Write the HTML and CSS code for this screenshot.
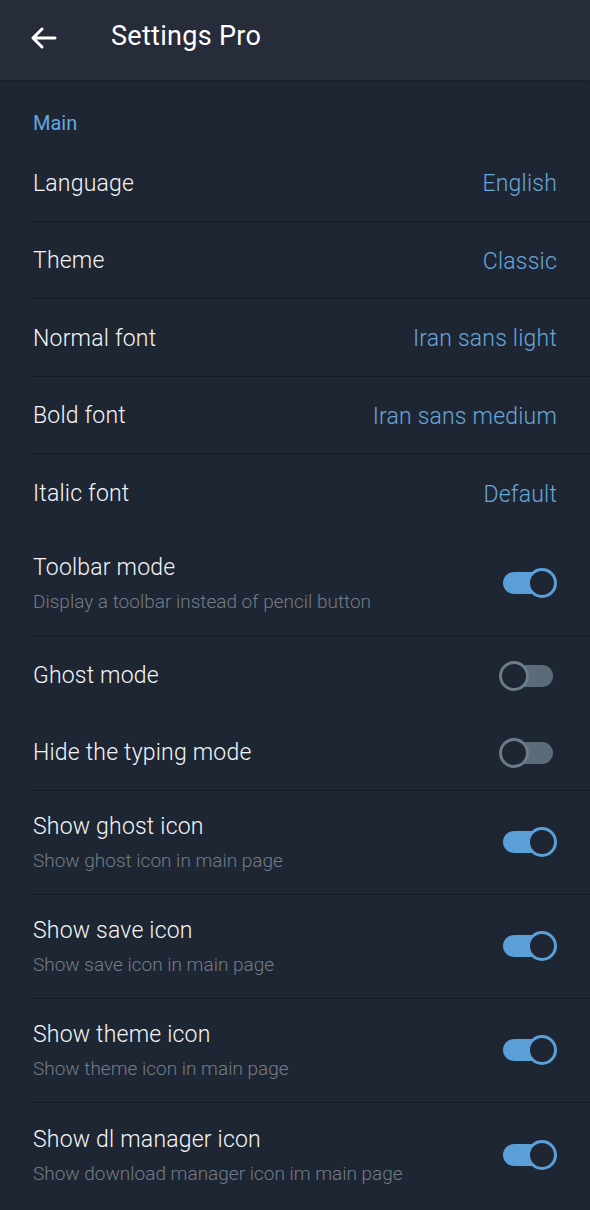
FILE: index.html
```html
<!DOCTYPE html>
<html>
<head>
<meta charset="utf-8">
<link rel="stylesheet" href="styles.css">
</head>
<body>
<div class="app">
  <header class="toolbar">
    <svg class="back" width="28" height="24" viewBox="0 0 28 24"><path d="M26 12H4M13 3L4 12L13 21" fill="none" stroke="#ffffff" stroke-width="3" stroke-linecap="round" stroke-linejoin="round"/></svg>
    <div class="title">Settings Pro</div>
  </header>
  <main class="list">
    <div class="section">Main</div>
    <div class="row single div"><span class="label">Language</span><span class="value">English</span></div>
    <div class="row single div"><span class="label">Theme</span><span class="value">Classic</span></div>
    <div class="row single div"><span class="label">Normal font</span><span class="value">Iran sans light</span></div>
    <div class="row single div"><span class="label">Bold font</span><span class="value">Iran sans medium</span></div>
    <div class="row single"><span class="label">Italic font</span><span class="value">Default</span></div>
    <div class="row double div">
      <div class="texts"><div class="label">Toolbar mode</div><div class="sub">Display a toolbar instead of pencil button</div></div>
      <div class="switch on"><div class="track"></div><div class="thumb"></div></div>
    </div>
    <div class="row single">
      <span class="label">Ghost mode</span>
      <div class="switch off"><div class="track"></div><div class="thumb"></div></div>
    </div>
    <div class="row single div">
      <span class="label">Hide the typing mode</span>
      <div class="switch off"><div class="track"></div><div class="thumb"></div></div>
    </div>
    <div class="row double div">
      <div class="texts"><div class="label">Show ghost icon</div><div class="sub">Show ghost icon in main page</div></div>
      <div class="switch on"><div class="track"></div><div class="thumb"></div></div>
    </div>
    <div class="row double div">
      <div class="texts"><div class="label">Show save icon</div><div class="sub">Show save icon in main page</div></div>
      <div class="switch on"><div class="track"></div><div class="thumb"></div></div>
    </div>
    <div class="row double div">
      <div class="texts"><div class="label">Show theme icon</div><div class="sub">Show theme icon in main page</div></div>
      <div class="switch on"><div class="track"></div><div class="thumb"></div></div>
    </div>
    <div class="row double">
      <div class="texts"><div class="label">Show dl manager icon</div><div class="sub">Show download manager icon im main page</div></div>
      <div class="switch on"><div class="track"></div><div class="thumb"></div></div>
    </div>
  </main>
</div>
</body>
</html>
```
FILE: styles.css
```css
html, body {
  margin: 0;
  padding: 0;
  background: #1f2633;
}
body {
  font-family: Roboto, "Noto Sans", "Liberation Sans", sans-serif;
  color: #f2f3f5;
  width: 590px;
  height: 1210px;
  overflow: hidden;
}
.toolbar {
  height: 80px;
  background: #262c39;
  display: flex;
  align-items: center;
  box-shadow: 0 1px 3px rgba(0,0,0,0.35);
  position: relative;
}
.back {
  margin-left: 29px;
  margin-top: -4px;
}
.title {
  margin-left: 54px;
  font-size: 27px;
  font-weight: 400;
  color: #ffffff;
  margin-top: -8px;
  letter-spacing: 0.3px;
}
.section {
  padding: 30px 33px 0;
  height: 34px;
  line-height: 26px;
  font-size: 20px;
  font-weight: 400;
  color: #63a8e0;
}
.row {
  margin-left: 32px;
  padding-left: 1px;
  padding-right: 33px;
  display: flex;
  align-items: center;
  justify-content: space-between;
  box-sizing: border-box;
}
.row.div {
  border-bottom: 1px solid #161c25;
}
.row.single {
  height: 77.5px;
  padding-top: 3px;
}
.row.double {
  height: 104px;
}
.label {
  font-size: 23px;
  font-weight: 300;
  color: #f4f5f7;
  line-height: 28px;
  letter-spacing: 0.2px;
}
.value {
  font-size: 23px;
  color: #66a6da;
  font-weight: 300;
  letter-spacing: 0.2px;
}
.texts {
  display: flex;
  flex-direction: column;
  padding-top: 2px;
}
.sub {
  font-size: 19px;
  font-weight: 300;
  color: #737c88;
  line-height: 24px;
  margin-top: 8px;
}
.switch {
  width: 56px;
  height: 30px;
  position: relative;
  flex: none;
}
.track {
  position: absolute;
  top: 4px;
  width: 50px;
  height: 22px;
  border-radius: 11px;
}
.thumb {
  position: absolute;
  top: 0;
  width: 24px;
  height: 24px;
  border-radius: 50%;
  border: 3px solid;
  background: #1f2633;
}
.switch.on .track {
  left: 2px;
  background: #5b9fd8;
}
.switch.on .thumb {
  right: 0;
  border-color: #5b9fd8;
}
.switch.off .track {
  left: 1px;
  width: 51px;
  background: #5b6b78;
}
.switch.off .thumb {
  left: -2px;
  border-color: #6b7c89;
}
```
